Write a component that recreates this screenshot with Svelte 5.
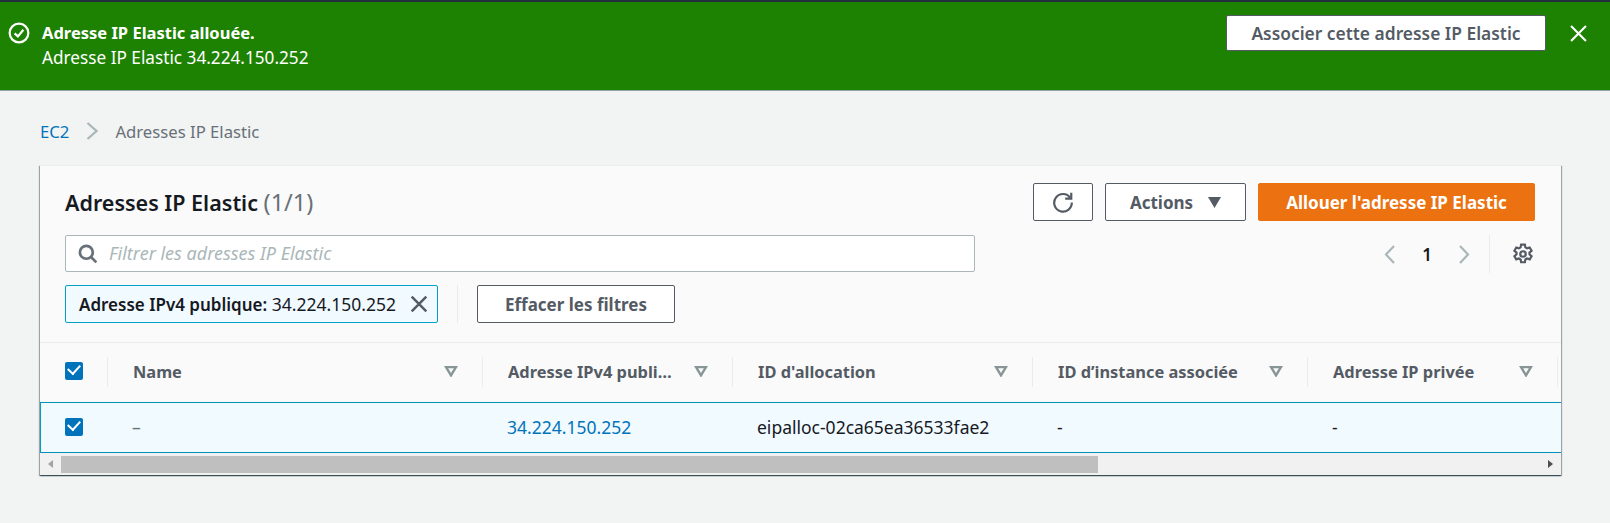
<script>
  const columns = [
    { label: "Name", width: 375 },
    { label: "Adresse IPv4 publique", width: 250 },
    { label: "ID d'allocation", width: 300 },
    { label: "ID d’instance associée", width: 275 },
    { label: "Adresse IP privée", width: 250 },
  ];
  const cells = [
    { text: "–", dim: true },
    { text: "34.224.150.252", link: true },
    { text: "eipalloc-02ca65ea36533fae2" },
    { text: "-" },
    { text: "-" },
  ];
</script>

<div class="page">
  <div class="banner">
    <svg class="ok" width="22" height="22" viewBox="0 0 20 20" fill="none" stroke="#fff" stroke-width="2">
      <circle cx="10" cy="10" r="8.500" />
      <path d="M6 10.300l3 2.800 5-6" />
    </svg>
    <div class="msg">
      <strong>Adresse IP Elastic allouée.</strong>
      <span>Adresse IP Elastic 34.224.150.252</span>
    </div>
    <button class="assoc">Associer cette adresse IP Elastic</button>
    <svg class="close" width="17" height="17" viewBox="0 0 16 16" stroke="#fff" stroke-width="2" fill="none">
      <path d="M1 1l14 14M15 1L1 15" />
    </svg>
  </div>

  <nav class="crumbs">
    <a href="#top">EC2</a>
    <svg width="12" height="18" viewBox="0 0 12 18" fill="none" stroke="#aab7b8" stroke-width="2.200">
      <path d="M1.500 1l9 8-9 8" />
    </svg>
    <span>Adresses IP Elastic</span>
  </nav>

  <section class="card">
    <div class="head">
      <div class="title-row">
        <h1>Adresses IP Elastic <span>(1/1)</span></h1>
        <div class="actions">
          <button class="btn icon" aria-label="refresh">
            <svg width="22" height="22" viewBox="0 0 20 20" fill="none" stroke="#545b64" stroke-width="2">
              <path d="M16.600 6.200A8 8 0 1 0 18 10.500" />
              <path d="M17.500 1.500v5.500h-5.500" />
            </svg>
          </button>
          <button class="btn menu">Actions
            <svg width="13" height="11" viewBox="0 0 12 10"><path d="M0 0h12L6 10z" fill="#545b64" /></svg>
          </button>
          <button class="btn primary">Allouer l'adresse IP Elastic</button>
        </div>
      </div>

      <div class="filter-row">
        <div class="search">
          <svg width="20" height="20" viewBox="0 0 18 18" fill="none" stroke="#687078" stroke-width="2.400">
            <circle cx="7.500" cy="7.500" r="5.800" />
            <path d="M11.500 11.500l5 5" />
          </svg>
          <span>Filtrer les adresses IP Elastic</span>
        </div>
        <div class="pager">
          <svg width="12" height="21" viewBox="0 0 12 20" fill="none" stroke="#aab7b8" stroke-width="2.200"><path d="M10 1.500L2 10l8 8.500" /></svg>
          <b>1</b>
          <svg width="12" height="21" viewBox="0 0 12 20" fill="none" stroke="#aab7b8" stroke-width="2.200"><path d="M2 1.500L10 10l-8 8.500" /></svg>
          <i></i>
          <svg class="gear" width="22" height="22" viewBox="0 0 20 20" fill="none" stroke="#545b64" stroke-width="2">
            <path d="M8.300 1.500h3.400l.5 2.500 1.500.9 2.400-.8 1.700 2.900-1.900 1.700v1.600l1.900 1.700-1.700 2.900-2.400-.8-1.500.9-.5 2.500H8.300l-.5-2.500-1.500-.9-2.400.8-1.700-2.900 1.900-1.700V8.700L2.200 7l1.700-2.900 2.400.8 1.500-.9z" />
            <circle cx="10" cy="10" r="2.500" />
          </svg>
        </div>
      </div>

      <div class="chips">
        <div class="chip">
          <span><b>Adresse IPv4 publique:</b> 34.224.150.252</span>
          <svg width="18" height="18" viewBox="0 0 16 16" fill="none" stroke="#545b64" stroke-width="2.200"><path d="M1.500 1.500l13 13M14.500 1.500l-13 13" /></svg>
        </div>
        <i></i>
        <button class="btn clear">Effacer les filtres</button>
      </div>
    </div>

    <div class="thead">
      <div class="check-col"><span class="check"></span></div>
      {#each columns as c}
        <div class="th" style="width: {c.width}px">
          <span class="label">{c.label}</span>
          <svg width="14" height="11" viewBox="0 0 12 10" fill="none" stroke="#879596" stroke-width="2.200"><path d="M1.500 1h9L6 8.500z" /></svg>
        </div>
      {/each}
    </div>

    <div class="row">
      <div class="check-col"><span class="check"></span></div>
      {#each cells as cell, i}
        <div class="td" class:link={cell.link} class:dim={cell.dim} style="width: {columns[i].width}px">{cell.text}</div>
      {/each}
    </div>

    <div class="scrollbar">
      <span class="arrow left"></span>
      <div class="track"><div class="thumb"></div></div>
      <span class="arrow right"></span>
    </div>
  </section>
</div>

<style>
  :global(body) {
    margin: 0;
    background: #f2f3f3;
  }
  .page {
    height: 523px;
    overflow: hidden;
    font-family: "Noto Sans", sans-serif;
    font-size: 14px;
    color: #16191f;
    background: #f2f3f3;
  }
  button {
    font-family: inherit;
    cursor: pointer;
  }
  svg {
    flex: none;
    display: block;
  }

  .banner {
    height: 91px;
    box-sizing: border-box;
    border-top: 2px solid #232f3e;
    border-bottom: 1px solid #95a5a6;
    background: #1d8102;
    color: #fff;
    display: flex;
    align-items: flex-start;
    padding: 13px 23px 0 8px;
  }
  .ok {
    margin: 7px 12px 0 0;
  }
  .msg {
    flex: 1;
    display: flex;
    flex-direction: column;
    margin-top: 6px;
    line-height: 24.500px;
    font-size: 17.200px;
  }
  .msg strong {
    font-size: 16.500px;
    font-weight: 700;
  }
  .assoc {
    width: 320px;
    height: 36px;
    background: #fff;
    border: 1px solid #545b64;
    border-radius: 2px;
    color: #545b64;
    font-size: 17.400px;
    font-weight: 600;
    padding: 0;
  }
  .close {
    margin: 10px 0 0 24px;
  }

  .crumbs {
    display: flex;
    align-items: center;
    height: 20px;
    margin: 30px 0 0 40px;
    font-size: 16.700px;
    color: #687078;
  }
  .crumbs a {
    color: #0073bb;
    text-decoration: none;
  }
  .crumbs svg {
    margin: 0 17px;
  }

  .card {
    width: 1521px;
    height: 310px;
    box-sizing: border-box;
    margin: 24px 0 0 40px;
    background: #fafafa;
    border-top: 1px solid #eaeded;
    box-shadow: 0 1px 1px 0 rgba(0, 28, 36, 0.5), 1px 1px 1px 0 rgba(0, 28, 36, 0.3), -1px 1px 1px 0 rgba(0, 28, 36, 0.3);
    display: flex;
    flex-direction: column;
  }
  .head {
    height: 177px;
    flex: none;
    box-sizing: border-box;
    padding: 17px 26px 0 25px;
    border-bottom: 1px solid #eaeded;
  }
  .title-row {
    display: flex;
    justify-content: space-between;
    align-items: flex-start;
  }
  h1 {
    margin: 4px 0 0;
    font-size: 21.500px;
    line-height: 30px;
    font-weight: 600;
  }
  h1 span {
    font-size: 23.500px;
    font-weight: 400;
    color: #687078;
  }
  .actions {
    display: flex;
    gap: 12px;
  }
  .btn {
    height: 38px;
    box-sizing: border-box;
    background: #fff;
    border: 1px solid #545b64;
    border-radius: 2px;
    color: #545b64;
    font-size: 17px;
    font-weight: 700;
    padding: 0;
    display: flex;
    align-items: center;
    justify-content: center;
  }
  .btn.icon {
    width: 60px;
  }
  .btn.menu {
    width: 141px;
    gap: 15px;
  }
  .btn.primary {
    width: 277px;
    background: #ec7211;
    border-color: #ec7211;
    color: #fff;
  }

  .filter-row {
    display: flex;
    justify-content: space-between;
    margin-top: 14px;
  }
  .search {
    width: 910px;
    height: 37px;
    box-sizing: border-box;
    border: 1px solid #aab7b8;
    border-radius: 2px;
    background: #fff;
    display: flex;
    align-items: center;
    padding: 0 0 0 12px;
    gap: 11px;
  }
  .search span {
    font-style: italic;
    font-size: 18px;
    margin-top: -2px;
    color: #aab7b8;
  }
  .pager {
    display: flex;
    align-items: center;
    height: 38px;
    padding-right: 1px;
  }
  .pager b {
    width: 50px;
    margin: 0 6px;
    text-align: center;
    font-size: 17px;
    font-weight: 600;
  }
  .pager i {
    width: 1px;
    height: 38px;
    background: #eaeded;
    margin: 0 22px 0 19px;
  }

  .chips {
    display: flex;
    align-items: stretch;
    margin-top: 12px;
    height: 38px;
  }
  .chip {
    width: 373px;
    box-sizing: border-box;
    border: 1px solid #00a1c9;
    border-radius: 2px;
    background: #f1faff;
    display: flex;
    align-items: center;
    justify-content: space-between;
    padding: 0 9px 0 13px;
    font-size: 17.500px;
    white-space: nowrap;
  }
  .chip b {
    font-size: 17px;
    font-weight: 600;
  }
  .chips > i {
    width: 1px;
    background: #eaeded;
    margin: 0 19px 0 19px;
  }
  .btn.clear {
    width: 198px;
  }

  .thead,
  .row {
    display: flex;
    align-items: center;
    overflow: hidden;
    flex: none;
  }
  .thead {
    height: 59px;
    box-sizing: border-box;
    padding-bottom: 2px;
  }
  .row {
    height: 51px;
    box-sizing: border-box;
    background: #f1faff;
    border-top: 1px solid #0091b5;
    border-bottom: 1px solid #0091b5;
    border-left: 1px solid #00a1c9;
  }
  .check-col {
    width: 68px;
    flex: none;
    box-sizing: border-box;
    padding-left: 25px;
  }
  .thead .check-col {
    height: 30px;
    display: flex;
    align-items: center;
    border-right: 1px solid #eaeded;
  }
  .thead .check {
    margin-top: -2px;
  }
  .row .check-col {
    width: 67px;
    padding-left: 24px;
    display: flex;
    margin-top: -2px;
  }
  .check {
    position: relative;
    width: 18px;
    height: 18px;
    border-radius: 2px;
    background: #0073bb;
    display: block;
  }
  .check::after {
    content: "";
    position: absolute;
    left: 3px;
    top: 2.500px;
    box-sizing: border-box;
    width: 12px;
    height: 8px;
    border-left: 2.500px solid #fff;
    border-bottom: 2.500px solid #fff;
    transform: rotate(-48deg);
  }
  .th {
    flex: none;
    height: 30px;
    box-sizing: border-box;
    display: flex;
    align-items: center;
    padding: 0 24px 0 25px;
    border-right: 1px solid #eaeded;
    gap: 14px;
  }
  .label {
    flex: 1;
    min-width: 0;
    overflow: hidden;
    text-overflow: ellipsis;
    white-space: nowrap;
    font-size: 16.400px;
    font-weight: 700;
    color: #545b64;
  }
  .td {
    flex: none;
    box-sizing: border-box;
    padding: 0 0 2px 24px;
    font-size: 17.500px;
  }
  .td.link {
    color: #0073bb;
  }
  .td.dim {
    color: #687078;
  }

  .scrollbar {
    flex: 1;
    display: flex;
    align-items: stretch;
    background: #f1f1f1;
    padding: 3px 0 2px;
  }
  .track {
    flex: 1;
  }
  .thumb {
    width: 1037px;
    height: 100%;
    background: #bfbfbf;
  }
  .arrow {
    width: 21px;
    flex: none;
    position: relative;
  }
  .arrow::after {
    content: "";
    position: absolute;
    top: 4px;
    border-top: 4px solid transparent;
    border-bottom: 4px solid transparent;
  }
  .arrow.left::after {
    left: 8px;
    border-right: 5px solid #a3a3a3;
  }
  .arrow.right::after {
    right: 8px;
    border-left: 5px solid #505050;
  }
</style>
